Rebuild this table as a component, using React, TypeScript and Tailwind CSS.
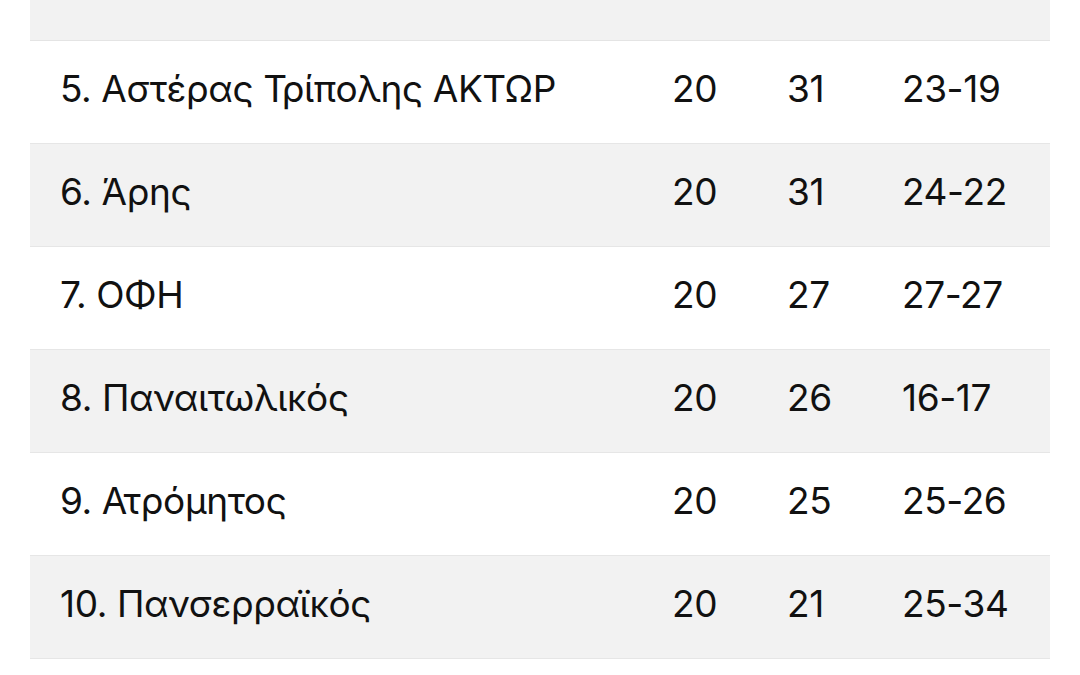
import React from 'react';

interface Row {
    name: string;
    played: number;
    points: number;
    goals: string;
}

const rows: Row[] = [
    { name: '5. Αστέρας Τρίπολης ΑΚΤΩΡ', played: 20, points: 31, goals: '23-19' },
    { name: '6. Άρης', played: 20, points: 31, goals: '24-22' },
    { name: '7. ΟΦΗ', played: 20, points: 27, goals: '27-27' },
    { name: '8. Παναιτωλικός', played: 20, points: 26, goals: '16-17' },
    { name: '9. Ατρόμητος', played: 20, points: 25, goals: '25-26' },
    { name: '10. Πανσερραϊκός', played: 20, points: 21, goals: '25-34' },
];

export default function App() {
    return (
        <div className="w-[1080px] h-[675px] overflow-hidden bg-white px-[30px] text-[#111111] font-['Inter',sans-serif]">
            {/* cut-off header row */}
            <div className="h-[41px] bg-[#f2f2f2] border-b border-[#e4e4e4]" />

            {rows.map((row, i) => (
                <div
                    key={row.name}
                    className={`grid grid-cols-[612px_115px_115px_1fr] items-center h-[103px] pl-[30px] pb-[6px] text-[37px] tracking-[-0.4px] border-b border-[#e6e6e6] ${i % 2 === 0 ? 'bg-white' : 'bg-[#f2f2f2]'}`}
                >
                    <span>{row.name}</span>
                    <span>{row.played}</span>
                    <span>{row.points}</span>
                    <span>{row.goals}</span>
                </div>
            ))}
        </div>
    );
}
